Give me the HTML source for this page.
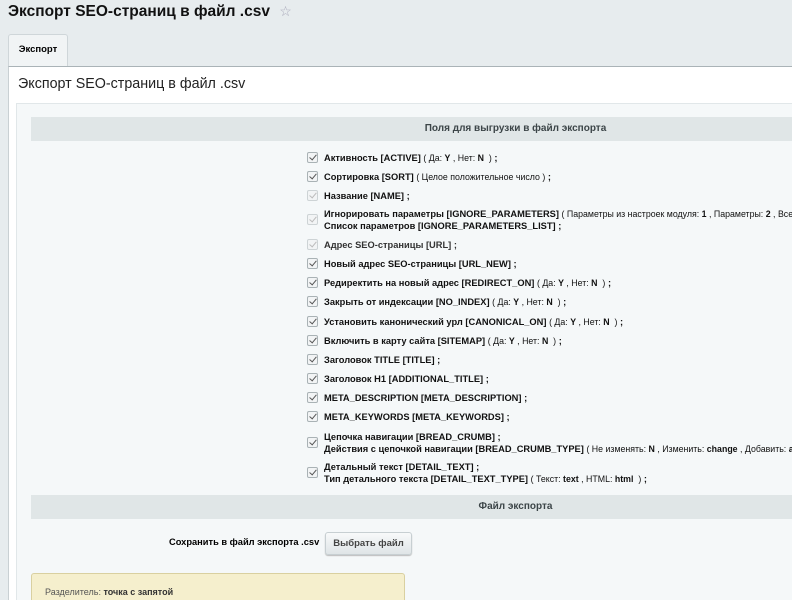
<!DOCTYPE html>
<html><head><meta charset="utf-8"><style>
*{margin:0;padding:0;box-sizing:border-box}
html,body{width:792px;height:600px;overflow:hidden}
body{background:#e7ecee;font-family:"Liberation Sans",Arial,sans-serif;position:relative;color:#000}
.a{position:absolute;white-space:nowrap}
h1{position:absolute;left:8px;top:3px;font-size:15.5px;font-weight:bold;color:#111;white-space:nowrap}
.tab{position:absolute;left:8px;top:34px;width:60px;height:33px;background:#f1f4f5;border:1px solid #cfd6d9;border-bottom:none;border-radius:3px 3px 0 0;font-size:9.5px;font-weight:bold;text-align:center;line-height:30px}
.panel{position:absolute;left:8px;top:66px;width:784px;height:534px;background:#fff;border-left:1px solid #c9d0d3;border-top:1px solid #aab3b7}
.inner{position:absolute;left:16px;top:103px;width:776px;height:497px;background:#f5f8f9;border-left:1px solid #e1e7e9;border-top:1px solid #e1e7e9}
.bar{position:absolute;left:31px;width:761px;height:24px;background:#e0e6e7;font-size:10px;font-weight:bold;color:#3c4548;text-align:center;line-height:24px;padding-left:208px}
.row{position:absolute;left:307px;width:485px;overflow:hidden;height:26px;font-size:9.3px;font-weight:bold;white-space:nowrap;color:#111}
.cb{position:absolute;left:0;top:0;width:11px;height:11px;border:1px solid #a9b2b5;border-radius:2px;background:#f2f4f5}
.cb:after{content:"";position:absolute;left:3px;top:0px;width:3px;height:6px;border:solid #555;border-width:0 1.5px 1.5px 0;transform:rotate(40deg)}
.cb.d{border-color:#cdd3d5}.cb.d:after{border-color:#bbb}
.t{position:absolute;left:17px;top:0;line-height:12px}
.n{font-weight:normal;font-size:8.8px}
.row.two .cb{top:6px}
</style></head><body>
<h1>Экспорт SEO-страниц в файл .csv <span style="color:#aab;font-size:14px;font-weight:normal;margin-left:5px">☆</span></h1>
<div class="tab">Экспорт</div>
<div class="panel"></div>
<div class="a" style="left:18px;top:76px;font-size:14.3px;color:#222">Экспорт SEO-страниц в файл .csv</div>
<div class="inner"></div>
<div class="bar" style="top:117px">Поля для выгрузки в файл экспорта</div>

<div class="row" style="top:152px"><div class="cb"></div><div class="t">Активность [ACTIVE] <span class="n">( Да: <b>Y</b> , Нет: <b>N</b> &nbsp;)</span> ;</div></div>
<div class="row" style="top:171px"><div class="cb"></div><div class="t">Сортировка [SORT] <span class="n">( Целое положительное число )</span> ;</div></div>
<div class="row" style="top:190px"><div class="cb d"></div><div class="t">Название [NAME] ;</div></div>
<div class="row two" style="top:208px"><div class="cb d"></div><div class="t">Игнорировать параметры [IGNORE_PARAMETERS] <span class="n">( Параметры из настроек модуля: <b>1</b> , Параметры: <b>2</b> , Все параметры</span><br>Список параметров [IGNORE_PARAMETERS_LIST] ;</div></div>
<div class="row" style="top:239px"><div class="cb d"></div><div class="t" style="color:#333">Адрес SEO-страницы [URL] ;</div></div>
<div class="row" style="top:258px"><div class="cb"></div><div class="t">Новый адрес SEO-страницы [URL_NEW] ;</div></div>
<div class="row" style="top:277px"><div class="cb"></div><div class="t">Редиректить на новый адрес [REDIRECT_ON] <span class="n">( Да: <b>Y</b> , Нет: <b>N</b> &nbsp;)</span> ;</div></div>
<div class="row" style="top:296px"><div class="cb"></div><div class="t">Закрыть от индексации [NO_INDEX] <span class="n">( Да: <b>Y</b> , Нет: <b>N</b> &nbsp;)</span> ;</div></div>
<div class="row" style="top:316px"><div class="cb"></div><div class="t">Установить канонический урл [CANONICAL_ON] <span class="n">( Да: <b>Y</b> , Нет: <b>N</b> &nbsp;)</span> ;</div></div>
<div class="row" style="top:335px"><div class="cb"></div><div class="t">Включить в карту сайта [SITEMAP] <span class="n">( Да: <b>Y</b> , Нет: <b>N</b> &nbsp;)</span> ;</div></div>
<div class="row" style="top:354px"><div class="cb"></div><div class="t">Заголовок TITLE [TITLE] ;</div></div>
<div class="row" style="top:373px"><div class="cb"></div><div class="t">Заголовок H1 [ADDITIONAL_TITLE] ;</div></div>
<div class="row" style="top:392px"><div class="cb"></div><div class="t">META_DESCRIPTION [META_DESCRIPTION] ;</div></div>
<div class="row" style="top:411px"><div class="cb"></div><div class="t">META_KEYWORDS [META_KEYWORDS] ;</div></div>
<div class="row two" style="top:431px"><div class="cb"></div><div class="t">Цепочка навигации [BREAD_CRUMB] ;<br>Действия с цепочкой навигации [BREAD_CRUMB_TYPE] <span class="n">( Не изменять: <b>N</b> , Изменить: <b>change</b> , Добавить: <b>append</b></span></div></div>
<div class="row two" style="top:461px"><div class="cb"></div><div class="t">Детальный текст [DETAIL_TEXT] ;<br>Тип детального текста [DETAIL_TEXT_TYPE] <span class="n">( Текст: <b>text</b> , HTML: <b>html</b> &nbsp;)</span> ;</div></div>

<div class="bar" style="top:495px">Файл экспорта</div>
<div class="a" style="left:169px;top:537px;font-size:9.3px;font-weight:bold">Сохранить в файл экспорта .csv</div>
<div class="a" style="left:325px;top:532px;width:87px;height:23px;background:linear-gradient(#f8fafa,#dfe5e7);border:1px solid #c7cfd2;border-radius:3px;font-size:9.5px;font-weight:bold;color:#444;text-align:center;line-height:21px;box-shadow:0 1px 1px #bbb">Выбрать файл</div>
<div class="a" style="left:31px;top:573px;width:374px;height:40px;background:#f5efcd;border:1px solid #d9d0a0;border-radius:3px;font-size:9px;padding:12px 13px;color:#555;line-height:12px">Разделитель: <b style="color:#333">точка с запятой</b><br>Кодировка: <b>UTF-8</b></div>
</body></html>
